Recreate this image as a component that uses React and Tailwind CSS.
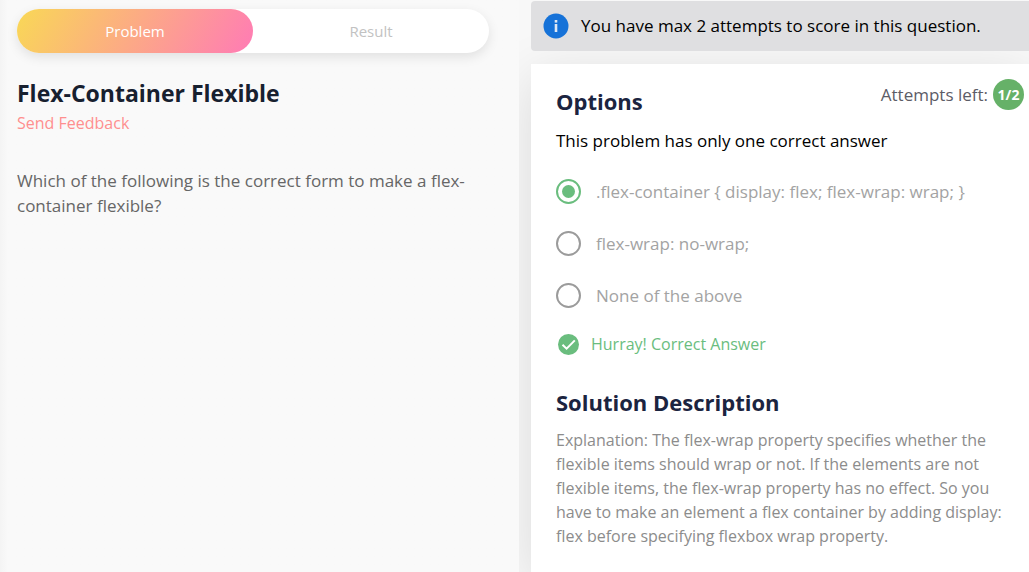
import React, { useState } from "react";

const OPTIONS = [
  ".flex-container { display: flex; flex-wrap: wrap; }",
  "flex-wrap: no-wrap;",
  "None of the above",
];

function Tabs() {
  return (
    <div role="tablist" className="flex h-11 rounded-full bg-white shadow-[0_4px_12px_rgba(0,0,0,0.1)]">
      <button
        type="button"
        role="tab"
        aria-selected="true"
        className="flex-1 rounded-full bg-linear-[120deg,#f9d856,#ff7bb5] text-[15px] text-white"
      >
        Problem
      </button>
      <button type="button" role="tab" aria-selected="false" className="flex-1 text-[15px] text-[#c2c2c2]">
        Result
      </button>
    </div>
  );
}

function ProblemPanel() {
  return (
    <section className="relative z-10 bg-[#f9f9f9] bg-linear-to-r from-[#f4f4f4] to-[#f9f9f9] to-[8px] pt-[9px] pr-[30px] pl-[17px]">
      <Tabs />
      <h1 className="mt-6 text-[23px] leading-8 font-bold text-[#17202f]">Flex-Container Flexible</h1>
      <a href="#feedback" className="mt-1 block text-[16px] leading-5 text-[#ff8f8f]">
        Send Feedback
      </a>
      <p className="mt-[35px] text-[17px] leading-[25px] text-[#666]">
        Which of the following is the correct form to make a flex-container flexible?
      </p>
    </section>
  );
}

function InfoBanner() {
  return (
    <div role="status" className="relative flex h-[50px] items-center gap-3 rounded-l-[4px] bg-[#dfdfe1] pl-3">
      <svg viewBox="0 0 26 26" className="size-[26px] shrink-0" aria-hidden="true">
        <circle cx="13" cy="13" r="12.5" fill="#1672d8" />
        <rect x="11.7" y="7" width="2.6" height="2.6" fill="#dfe8f5" />
        <rect x="11.7" y="11" width="2.6" height="8" fill="#dfe8f5" />
      </svg>
      <p className="text-[17px] leading-6 font-medium whitespace-nowrap text-black">
        You have max 2 attempts to score in this question.
      </p>
    </div>
  );
}

function Option({ label, index, checked, onSelect }) {
  const id = `option-${index}`;
  return (
    <div className="flex items-center gap-[15px]">
      <span className="grid size-[25px] shrink-0 place-items-center">
        <input
          type="radio"
          id={id}
          name="answer"
          checked={checked}
          onChange={onSelect}
          className="peer col-start-1 row-start-1 size-[25px] appearance-none rounded-full border-2 border-[#9b9b9b] bg-white checked:border-[#6abd7e]"
        />
        <span className="pointer-events-none col-start-1 row-start-1 hidden size-[13px] rounded-full bg-[#6abd7e] peer-checked:block" />
      </span>
      <label htmlFor={id} className="text-[17px] leading-6 text-[#a3a3a3]">
        {label}
      </label>
    </div>
  );
}

function AnswerCard() {
  const [selected, setSelected] = useState(0);
  return (
    <div className="grow bg-white pt-[15px] pr-5 pb-6 pl-[25px] shadow-[0_12px_50px_rgba(0,0,0,0.12)]">
      <div className="-mr-[15px] flex items-start justify-between">
        <h2 className="mt-[6px] text-[22px] leading-8 font-bold text-[#1b2440]">Options</h2>
        <div className="flex items-center gap-[5px]">
          <span className="text-[17px] leading-6 font-medium text-[#5c5c66]">Attempts left:</span>
          <span className="grid size-[31px] place-items-center rounded-full bg-[#66b168] text-[14px] font-bold text-white">
            1/2
          </span>
        </div>
      </div>
      <p className="mt-3 text-[17px] leading-6 text-black">This problem has only one correct answer</p>
      <div role="radiogroup" aria-label="Options" className="mt-[26px] flex flex-col gap-[27px]">
        {OPTIONS.map((label, i) => (
          <Option key={label} label={label} index={i} checked={selected === i} onSelect={() => setSelected(i)} />
        ))}
      </div>
      <div className="mt-6 flex items-center gap-3 pl-[2px] text-[#6abd7e]">
        <svg viewBox="0 0 21 21" className="size-[21px] shrink-0" aria-hidden="true">
          <circle cx="10.5" cy="10.5" r="10.5" fill="currentColor" />
          <path d="M4.5 10.7 8.6 14.7 16.8 6.4" fill="none" stroke="white" strokeWidth="2" />
        </svg>
        <span className="text-[16px] leading-6">Hurray! Correct Answer</span>
      </div>
      <h2 className="mt-[30px] text-[22px] leading-8 font-bold text-[#1b2440]">Solution Description</h2>
      <p className="mt-[10px] text-[16px] leading-6 text-[#8c8c8c]">
        Explanation: The flex-wrap property specifies whether the flexible items should wrap or not. If the elements are
        not flexible items, the flex-wrap property has no effect. So you have to make an element a flex container by
        adding display: flex before specifying flexbox wrap property.
      </p>
    </div>
  );
}

export default function App() {
  return (
    <main className="grid min-h-screen grid-cols-[519fr_498fr] gap-x-3 overflow-x-hidden bg-[#f8f8f8] font-['Open_Sans','Noto_Sans',sans-serif]">
      <ProblemPanel />
      <section className="flex min-w-0 flex-col gap-[13px] pt-px">
        <InfoBanner />
        <AnswerCard />
      </section>
    </main>
  );
}
